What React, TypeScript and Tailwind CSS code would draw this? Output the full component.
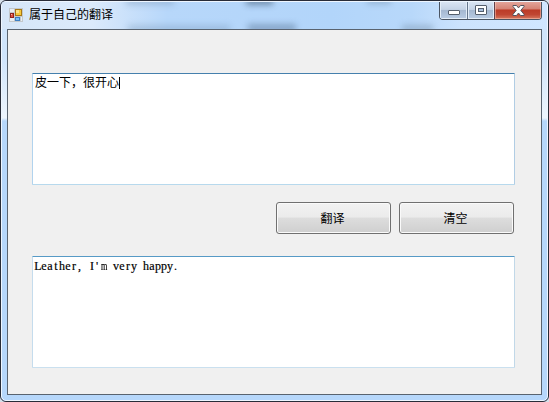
function FormIcon() {
  return (
    <svg width="14" height="14" viewBox="0 0 14 14" shapeRendering="crispEdges" className="shrink-0">
      <rect width="14" height="14" fill="#c3c8cc" />
      <path d="M1 1h4v3H1zM1 10h4v3H1zM12 9h1v4h-1z" fill="#e9eef3" />
      <rect x="1" y="5" width="4" height="5" fill="#8f2420" />
      <rect x="2" y="6" width="2" height="3" fill="#e0503f" />
      <rect x="2" y="6" width="1" height="1" fill="#ffb6a5" />
      <rect x="6" y="1" width="7" height="7" fill="#a87915" />
      <rect x="7" y="2" width="5" height="5" fill="#f6c93c" />
      <rect x="7" y="2" width="3" height="3" fill="#fbe28a" />
      <rect x="6" y="9" width="5" height="4" fill="#3d7fc4" />
      <rect x="7" y="10" width="3" height="2" fill="#7cc0f5" />
    </svg>
  );
}

function CaptionButtons() {
  return (
    <div className="mr-[5px] flex h-[19px] w-[103px] overflow-hidden rounded-b-[4px] border border-t-0 border-[#4b5563]">
      <div className="flex w-[28px] items-center justify-center border-r border-[#65768c] bg-[linear-gradient(#dce7f5_0%,#c5d3e6_47%,#a4b7d0_50%,#b9cce4_100%)] shadow-[inset_0_0_0_1px_#e3edf8]">
        <svg width="12" height="5" viewBox="0 0 12 5" className="mt-[5px]">
          <rect x="0.5" y="0.5" width="11" height="4" rx="0.5" fill="#fff" stroke="#555f6d" />
        </svg>
      </div>
      <div className="flex w-[27px] items-center justify-center border-r border-[#62404a] bg-[linear-gradient(#dce7f5_0%,#c5d3e6_47%,#a4b7d0_50%,#b9cce4_100%)] shadow-[inset_0_0_0_1px_#e3edf8]">
        <svg width="12" height="10" viewBox="0 0 12 10">
          <rect x="0.5" y="0.5" width="11" height="9" rx="0.5" fill="#fff" stroke="#555f6d" />
          <rect x="3.5" y="3.5" width="5" height="3" fill="#a9bfdc" stroke="#555f6d" />
        </svg>
      </div>
      <div className="flex flex-1 items-center justify-center bg-[linear-gradient(#e5a99f_0%,#d58375_44%,#bc3b27_50%,#c04632_75%,#d6785f_100%)] shadow-[inset_0_0_0_1px_rgba(255,205,190,0.5)]">
        <svg width="13" height="11" viewBox="0 0 13 11">
          <path d="M1 .5h3.5l2 2.4 2-2.4H12v1L8.8 5.4 12 9.3v1.2H8.5l-2-2.5-2 2.5H1V9.3l3.2-3.9L1 1.5z" fill="#fff" stroke="#54545f" />
        </svg>
      </div>
    </div>
  );
}

function TitleBar() {
  return (
    <div className="relative flex h-[27px] shrink-0 items-start justify-between overflow-hidden bg-[linear-gradient(90deg,#d6e6f8_0px,#dbeafb_90px,#b7d7fa_165px,#b2d5fa_330px,#b8d8fa_410px,#cce3fd_460px,#d0e6ff_547px)]">
      <div className="absolute top-[-5px] left-[124px] h-[8px] w-[48px] bg-[#7795b5] opacity-40 blur-[3px]" />
      <div className="absolute top-[-5px] left-[244px] h-[8px] w-[27px] bg-[#45607b] opacity-60 blur-[3px]" />
      <div className="absolute top-[-5px] left-[365px] h-[7px] w-[24px] bg-[#66819d] opacity-40 blur-[3px]" />
      <div className="absolute top-[23px] left-[126px] h-[8px] w-[102px] bg-[#7192b3] opacity-35 blur-[3px]" />
      <div className="absolute top-[22px] left-[246px] h-[8px] w-[48px] bg-[#607e9e] opacity-55 blur-[3px]" />
      <div className="absolute top-[23px] left-[400px] h-[7px] w-[31px] bg-[#7f9ab5] opacity-55 blur-[3px]" />
      <div className="relative flex items-start gap-[6px] pt-[6px] pl-[7px]">
        <FormIcon />
        <span className="-mt-px text-[12px] leading-[16px] whitespace-nowrap text-black">属于自己的翻译</span>
      </div>
      <div className="relative -mt-px">
        <CaptionButtons />
      </div>
    </div>
  );
}

function PushButton({ label }: { label: string }) {
  return (
    <button className="flex h-[32px] w-[115px] items-center justify-center rounded-[3px] border border-[#707070] bg-[linear-gradient(#f2f2f2_0%,#ebebeb_47%,#dddddd_50%,#cfcfcf_100%)] pt-[2px] pr-[2px] text-[12px] leading-[16px] text-black shadow-[inset_0_0_0_1px_#fafafa]">
      {label}
    </button>
  );
}

// Half-width characters sit in fixed 6px cells.
function CellText({ text }: { text: string }) {
  return (
    <span className="flex font-['Liberation_Serif',serif] text-[12px] leading-[16px] whitespace-pre text-black [-webkit-text-stroke:0.2px_black]">
      {Array.from(text).map((character, index) => (
        <span
          key={index}
          className={
            character === "m"
              ? "flex w-[6px] origin-left scale-x-[0.68]"
              : /[,.']/.test(character)
                ? "flex w-[6px] justify-start pl-px"
                : "flex w-[6px] justify-center"
          }
        >
          {character}
        </span>
      ))}
    </span>
  );
}

export default function App() {
  return (
    <div className="h-[402px] w-[549px] bg-[#d5dfe9] font-['Liberation_Sans','Noto_Sans_CJK_SC',sans-serif]">
      <div className="flex h-full w-full flex-col overflow-hidden rounded-[6px] border border-[#282c38] bg-[linear-gradient(#cfe4fb_0px,#cfe4fb_55px,#edf5fd_117px,#b6d7fb_120px,#b6d7fb_100%)]">
        <div className="flex h-full flex-col rounded-[5px] border border-[#eef6ff]">
          <TitleBar />
          <main className="mx-[5px] mb-[5px] flex min-h-0 flex-1 flex-col border border-[#59636f] bg-[#f0f0f0] pt-[43px] pl-[24px]">
            <div className="flex h-[112px] w-[483px] items-start rounded-[1px] border border-t-[#4580ad] border-r-[#b1cde4] border-b-[#b7d9ed] border-l-[#b1d3ee] bg-white pt-px pl-[2px] text-[12px] leading-[17px]">
              <span>皮一下，很开心</span>
              <span className="mt-[2px] h-[12px] w-px bg-black" />
            </div>
            <div className="mt-[17px] flex w-[482px] justify-end gap-[8px]">
              <PushButton label="翻译" />
              <PushButton label="清空" />
            </div>
            <div className="mt-[22px] h-[112px] w-[483px] rounded-[1px] border border-t-[#569ac6] border-r-[#c1d8e8] border-b-[#cae0ef] border-l-[#c5dced] bg-white pt-px pl-[2px]">
              <CellText text="Leather, I'm very happy." />
            </div>
          </main>
        </div>
      </div>
    </div>
  );
}
